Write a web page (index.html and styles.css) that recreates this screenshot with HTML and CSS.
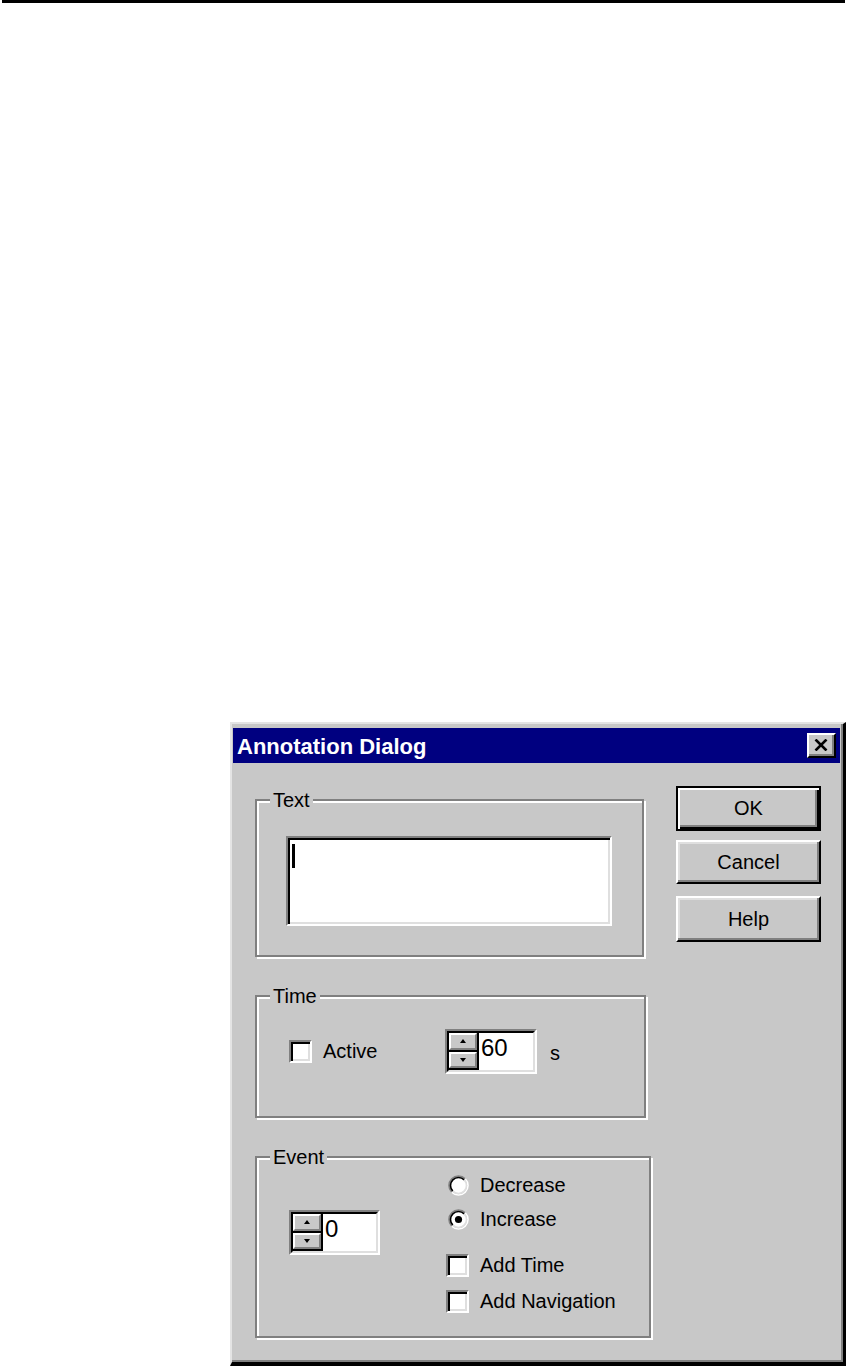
FILE: index.html
```html
<!DOCTYPE html>
<html>
<head>
<meta charset="utf-8">
<title>Annotation Dialog</title>
<link rel="stylesheet" href="styles.css">
</head>
<body>
<div class="rule"></div>
<div class="dialog">
  <div class="titlebar">
    <span class="title">Annotation Dialog</span>
    <div class="close">
      <svg width="14" height="12" viewBox="0 0 14 12"><path d="M1.5 0.5 L12.5 11.5 M12.5 0.5 L1.5 11.5" stroke="#000" stroke-width="2.6" fill="none"/></svg>
    </div>
  </div>
  <div class="body">
    <div class="groups">
      <fieldset class="group g-text">
        <legend>Text</legend>
        <div class="gbody gbody-text">
          <div class="textarea"><span class="caret"></span></div>
        </div>
      </fieldset>
      <fieldset class="group g-time">
        <legend>Time</legend>
        <div class="gbody gbody-time">
          <div class="time-row">
            <div class="opt opt-active"><span class="box"></span><span>Active</span></div>
            <div class="spin">
              <div class="spin-inner">
                <div class="spin-btns">
                  <div class="spin-btn"><svg width="6" height="4" viewBox="0 0 6 4"><path d="M3 0 L6 4 L0 4 Z" fill="#000"/></svg></div>
                  <div class="spin-btn"><svg width="6" height="4" viewBox="0 0 6 4"><path d="M0 0 L6 0 L3 4 Z" fill="#000"/></svg></div>
                </div>
                <div class="spin-val">60</div>
              </div>
            </div>
            <span class="unit">s</span>
          </div>
        </div>
      </fieldset>
      <fieldset class="group g-event">
        <legend>Event</legend>
        <div class="gbody gbody-event">
          <div class="event-left">
            <div class="spin spin-event">
              <div class="spin-inner">
                <div class="spin-btns">
                  <div class="spin-btn"><svg width="6" height="4" viewBox="0 0 6 4"><path d="M3 0 L6 4 L0 4 Z" fill="#000"/></svg></div>
                  <div class="spin-btn"><svg width="6" height="4" viewBox="0 0 6 4"><path d="M0 0 L6 0 L3 4 Z" fill="#000"/></svg></div>
                </div>
                <div class="spin-val">0</div>
              </div>
            </div>
          </div>
          <div class="event-right">
            <div class="opt radio-row">
              <svg class="radio" width="21" height="21" viewBox="0 0 21 21">
                <circle cx="10.5" cy="10.5" r="8" fill="#fff"/>
                <path d="M3.78 17.22 A9.5 9.5 0 0 1 17.22 3.78" stroke="#808080" stroke-width="1.6" fill="none"/>
                <path d="M17.22 3.78 A9.5 9.5 0 0 1 3.78 17.22" stroke="#fff" stroke-width="1.6" fill="none"/>
                <path d="M4.84 16.16 A8 8 0 0 1 16.16 4.84" stroke="#000" stroke-width="1.6" fill="none"/>
                <path d="M16.16 4.84 A8 8 0 0 1 4.84 16.16" stroke="#dfdfdf" stroke-width="1.6" fill="none"/>
              </svg>
              <span>Decrease</span>
            </div>
            <div class="opt radio-row">
              <svg class="radio" width="21" height="21" viewBox="0 0 21 21">
                <circle cx="10.5" cy="10.5" r="8" fill="#fff"/>
                <path d="M3.78 17.22 A9.5 9.5 0 0 1 17.22 3.78" stroke="#808080" stroke-width="1.6" fill="none"/>
                <path d="M17.22 3.78 A9.5 9.5 0 0 1 3.78 17.22" stroke="#fff" stroke-width="1.6" fill="none"/>
                <path d="M4.84 16.16 A8 8 0 0 1 16.16 4.84" stroke="#000" stroke-width="1.6" fill="none"/>
                <path d="M16.16 4.84 A8 8 0 0 1 4.84 16.16" stroke="#dfdfdf" stroke-width="1.6" fill="none"/>
                <circle cx="10.5" cy="10.5" r="3.6" fill="#000"/>
              </svg>
              <span>Increase</span>
            </div>
            <div class="opt check-row first-check"><span class="box"></span><span>Add Time</span></div>
            <div class="opt check-row"><span class="box"></span><span>Add Navigation</span></div>
          </div>
        </div>
      </fieldset>
    </div>
    <div class="buttons">
      <div class="btn btn-default">OK</div>
      <div class="btn btn-cancel">Cancel</div>
      <div class="btn btn-help">Help</div>
    </div>
  </div>
</div>
</body>
</html>
```
FILE: styles.css
```css
html, body {
  margin: 0;
  padding: 0;
  background: #fff;
}
body {
  font-family: "Liberation Sans", Arial, sans-serif;
  font-size: 20px;
  color: #000;
  overflow: hidden;
}
.rule {
  height: 3px;
  width: 843px;
  margin-left: 2px;
  background: #000;
}
.dialog {
  box-sizing: border-box;
  margin: 719px 0 0 230px;
  width: 616px;
  height: 644px;
  background: #c8c8c8;
  border-style: solid;
  border-width: 2px 3px 4px 2px;
  border-color: #e4e4e4 #000 #000 #e4e4e4;
  box-shadow: inset -2px -2px 0 #808080;
  padding: 4px 3px 0 1px;
}
.titlebar {
  height: 35px;
  background: #000080;
  display: flex;
  align-items: center;
  justify-content: space-between;
  padding: 0 4px 0 4px;
}
.title {
  color: #fff;
  font-weight: bold;
  font-size: 22px;
  padding-top: 2px;
}
.close {
  box-sizing: border-box;
  width: 29px;
  height: 25px;
  background: #c8c8c8;
  border-style: solid;
  border-width: 2px;
  border-color: #fff #000 #000 #fff;
  box-shadow: inset -2px -2px 0 #808080;
  display: flex;
  align-items: center;
  justify-content: center;
  padding: 0 2px 2px 0;
}
.body {
  display: flex;
  align-items: flex-start;
  padding: 0 19px 0 22px;
}
.groups {
  display: flex;
  flex-direction: column;
  align-items: flex-start;
}
.group {
  box-sizing: border-box;
  margin: 0;
  padding: 0;
  min-width: 0;
  border: 2px solid #808080;
  box-shadow: inset 2px 2px 0 #fff, 2px 2px 0 #fff;
}
.group legend {
  margin-left: 13px;
  padding: 0 3px;
  line-height: 22px;
  background: #c8c8c8;
}
.g-text {
  width: 389px;
  margin-top: 26px;
}
.gbody-text {
  padding: 25px 30px 29px 29px;
}
.textarea {
  box-sizing: border-box;
  height: 90px;
  background: #fff;
  border-style: solid;
  border-width: 2px;
  border-color: #808080 #fff #fff #808080;
  box-shadow: inset 2px 2px 0 #000, inset -2px -2px 0 #dfdfdf;
  padding: 6px 0 0 4px;
}
.caret {
  display: block;
  width: 3px;
  height: 24px;
  background: #000;
}
.g-time {
  width: 391px;
  margin-top: 28px;
}
.gbody-time {
  padding: 22px 0 42px 32px;
}
.time-row {
  display: flex;
  align-items: center;
}
.opt {
  display: flex;
  align-items: center;
}
.opt-active {
  width: 156px;
}
.box {
  box-sizing: border-box;
  flex: none;
  width: 23px;
  height: 23px;
  background: #fff;
  border-style: solid;
  border-width: 2px;
  border-color: #808080 #fff #fff #808080;
  box-shadow: inset 2px 2px 0 #000, inset -2px -2px 0 #dfdfdf;
  margin-right: 11px;
}
.spin {
  box-sizing: border-box;
  width: 92px;
  height: 45px;
  display: flex;
  border-style: solid;
  border-width: 2px;
  border-color: #808080 #fff #fff #808080;
}
.spin-inner {
  flex: 1;
  display: flex;
  background: #fff;
  border-style: solid;
  border-width: 2px;
  border-color: #000 #dfdfdf #dfdfdf #000;
}
.spin-btns {
  width: 28px;
  display: flex;
  flex-direction: column;
  gap: 2px;
  background: #000;
  border-right: 2px solid #000;
  border-bottom: 2px solid #000;
}
.spin-btn {
  flex: 1;
  box-sizing: border-box;
  background: #c8c8c8;
  border-style: solid;
  border-width: 2px;
  border-color: #fff #808080 #808080 #fff;
  display: flex;
  align-items: center;
  justify-content: center;
}
.spin-val {
  font-size: 24px;
  line-height: 30px;
  padding: 0 0 0 2px;
}
.unit {
  margin-left: 13px;
  position: relative;
  top: 2px;
}
.g-event {
  width: 396px;
  margin-top: 28px;
}
.gbody-event {
  display: flex;
  align-items: flex-start;
  padding: 0 0 17px 32px;
}
.event-left {
  width: 157px;
  padding-top: 42px;
}
.spin-event {
  width: 91px;
}
.event-right {
  display: flex;
  flex-direction: column;
}
.radio-row {
  height: 34px;
  padding-left: 2px;
}
.radio {
  flex: none;
  margin-right: 11px;
}
.check-row {
  height: 36px;
}
.first-check {
  margin-top: 11px;
}
.buttons {
  margin-left: auto;
  margin-top: 23px;
  display: flex;
  flex-direction: column;
}
.btn {
  box-sizing: border-box;
  width: 145px;
  height: 44px;
  display: flex;
  align-items: center;
  justify-content: center;
  background: #c8c8c8;
  border-style: solid;
  border-width: 2px;
  border-color: #fff #000 #000 #fff;
  box-shadow: inset -2px -2px 0 #808080, inset 2px 2px 0 #dfdfdf;
}
.btn-default {
  height: 45px;
  border-color: #000;
  box-shadow: inset 2px 2px 0 #fff, inset -2px -2px 0 #000, inset -4px -4px 0 #808080;
}
.btn-cancel {
  margin-top: 9px;
}
.btn-help {
  margin-top: 12px;
  height: 46px;
}
```
